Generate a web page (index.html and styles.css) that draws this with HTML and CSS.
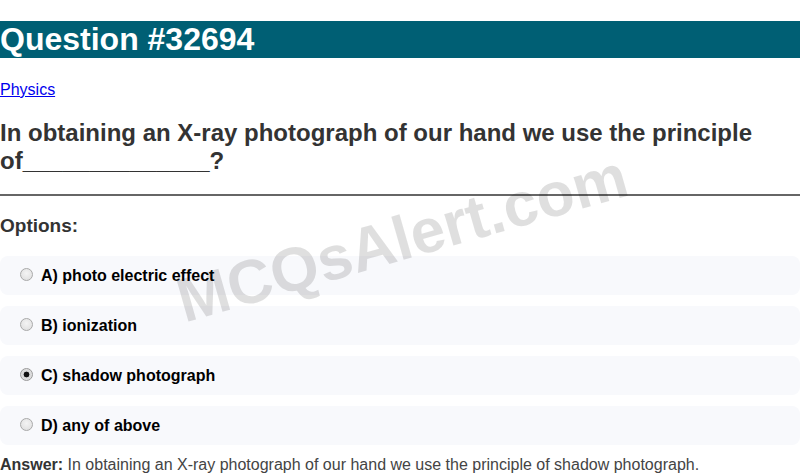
FILE: index.html
```html
<!DOCTYPE html>
<html>
<head>
<meta charset="utf-8">
<link rel="stylesheet" href="styles.css">
</head>
<body>
<div class="page">
  <h1 class="title">Question #32694</h1>
  <p class="cat"><a href="#">Physics</a></p>
  <h2 class="question">In obtaining an X-ray photograph of our hand we use the principle of______________?</h2>
  <hr class="rule">
  <h3 class="opt-head">Options:</h3>
  <div class="options">
    <label class="option"><input type="radio" name="q" class="radio"><span>A) photo electric effect</span></label>
    <label class="option"><input type="radio" name="q" class="radio"><span>B) ionization</span></label>
    <label class="option"><input type="radio" name="q" class="radio" checked><span>C) shadow photograph</span></label>
    <label class="option"><input type="radio" name="q" class="radio"><span>D) any of above</span></label>
  </div>
  <p class="answer"><strong>Answer:</strong> In obtaining an X-ray photograph of our hand we use the principle of shadow photograph.</p>
  <div class="watermark">MCQsAlert.com</div>
</div>
</body>
</html>
```
FILE: styles.css
```css
html, body {
  margin: 0;
  padding: 0;
  background: #fff;
}
body {
  font-family: "Liberation Sans", Arial, sans-serif;
  color: #333;
  overflow: hidden;
}
.page {
  position: relative;
  display: flow-root;
}
.title {
  margin: 21px 0 23px;
  background: #005f74;
  color: #fff;
  font-size: 32px;
  font-weight: bold;
  line-height: 37px;
}
.cat {
  margin: 16px 0;
  font-size: 16px;
}
.cat a {
  color: #0000ee;
}
.question {
  margin: 20px 0;
  font-size: 24px;
  line-height: 27.6px;
  font-weight: bold;
  color: #333;
}
.rule {
  margin: 0;
  border: none;
  border-top: 2px solid #666;
  height: 0;
}
.opt-head {
  margin: 19px 0;
  font-size: 19px;
  line-height: 21.5px;
  color: #333;
}
.options {
  margin-top: 19px;
  display: flex;
  flex-direction: column;
  gap: 11px;
}
.option {
  display: flex;
  align-items: center;
  background: #f8f9fc;
  border-radius: 8px;
  padding: 10px 15px;
  line-height: 19px;
  font-size: 16px;
  font-weight: bold;
  color: #000;
}
.radio {
  -webkit-appearance: none;
  appearance: none;
  box-sizing: border-box;
  margin: 0 8px 0 5px;
  width: 13px;
  height: 13px;
  border-radius: 50%;
  border: 1px solid #a9a9a9;
  background: radial-gradient(circle at 50% 40%, #f4f4f4 0%, #dcdcdc 100%);
  position: relative;
  top: -1px;
}
.radio:checked {
  background: radial-gradient(circle, #111 0, #111 2.6px, #d8d8d8 3.2px, #e6e6e6 100%);
  border-color: #9a9a9a;
}
.answer {
  margin: 10px 0 0;
  font-size: 16px;
  line-height: 19px;
  color: #444;
}
.answer strong {
  color: #333;
}
.watermark {
  position: absolute;
  left: 402px;
  top: 238px;
  transform: translate(-50%, -50%) rotate(-16deg);
  font-size: 62px;
  font-weight: bold;
  color: rgba(0, 0, 0, 0.125);
  white-space: nowrap;
  pointer-events: none;
}
```
